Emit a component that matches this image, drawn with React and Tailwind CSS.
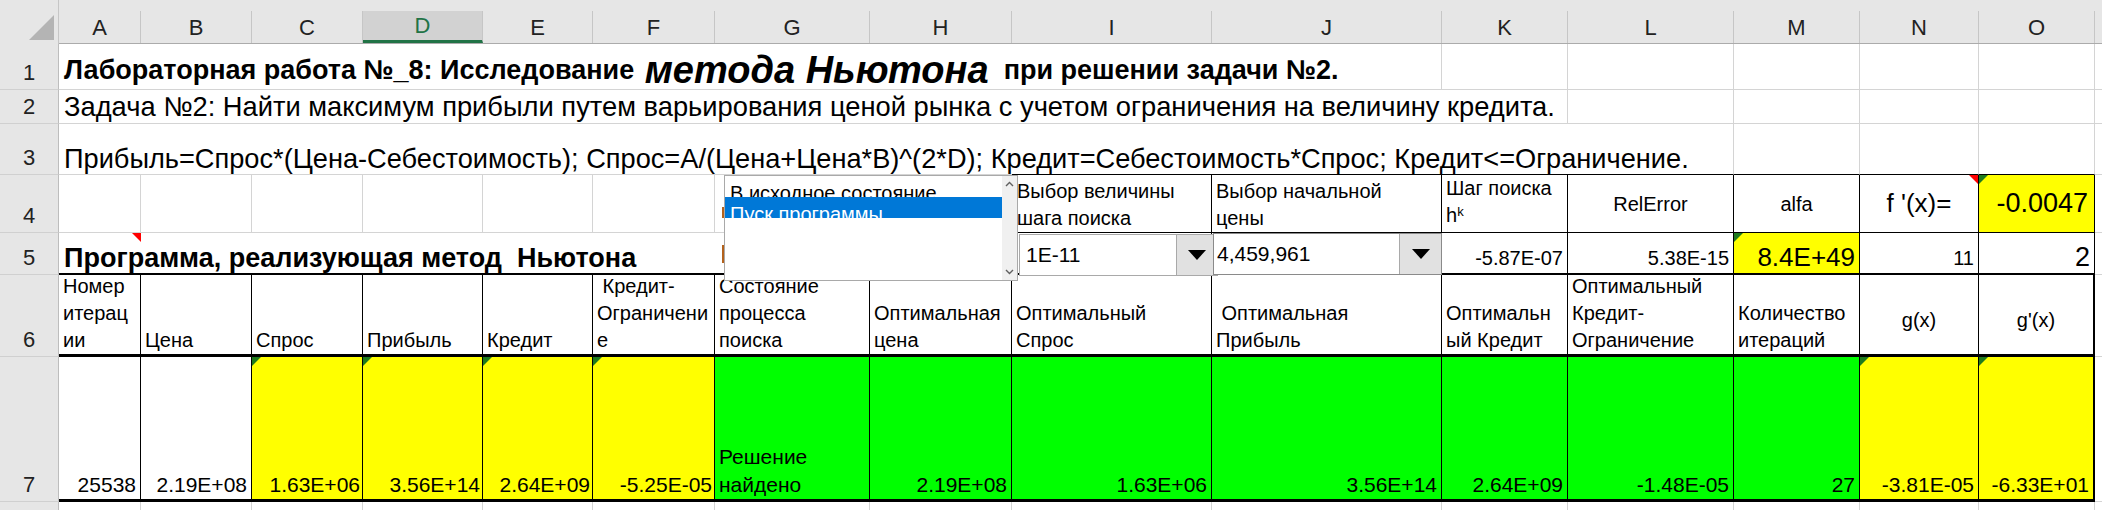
import React from 'react';

const gB = 'border-b border-b-[#d4d4d4]';
const gBR = 'border-b border-b-[#d4d4d4] border-r border-r-[#d4d4d4]';
const kBR = 'border-b border-b-black border-r border-r-black';

function ColHead({ label, selected }) {
  return (
    <div className="bg-[#e6e6e6] pt-[11px] flex border-b border-b-[#ababab]">
      <div
        className={
          selected
            ? 'flex-1 flex items-center justify-center border-r border-r-[#c6c6c6] bg-[#d2d2d2] border-b-[3px] border-b-[#217346] text-[#217346] text-[22px]'
            : 'flex-1 flex items-center justify-center border-r border-r-[#c6c6c6] text-[#222] text-[22px]'
        }
      >
        {label}
      </div>
    </div>
  );
}

function RowHead({ n }) {
  return (
    <div className="bg-[#e6e6e6] border-r border-r-[#bdbdbd] border-b border-b-[#d0d0d0] flex items-end justify-center pb-[3px] text-[22px] leading-[27px] text-[#222]">
      {n}
    </div>
  );
}

function GreenTri() {
  return <span className="absolute left-0 top-0 w-0 h-0 border-t-[9px] border-r-[9px] border-t-[#1e7b1e] border-r-transparent" />;
}

function RedTri() {
  return <span className="absolute right-0 top-0 w-0 h-0 border-t-[9px] border-l-[9px] border-t-[#ff0000] border-l-transparent" />;
}

function Arrow() {
  return (
    <svg width="18" height="10" viewBox="0 0 18 10">
      <polygon points="0,0 18,0 9,10" fill="#000" />
    </svg>
  );
}

export default function App() {
  const letters = ['A', 'B', 'C', 'D', 'E', 'F', 'G', 'H', 'I', 'J', 'K', 'L', 'M', 'N', 'O'];

  return (
    <div className="relative w-[2102px] h-[510px] overflow-hidden bg-white text-black font-['Liberation_Sans',Arial,sans-serif]">
      <div className="grid h-full grid-cols-[59px_82px_111px_111px_120px_110px_122px_155px_142px_200px_230px_126px_166px_126px_119px_116px_1fr] grid-rows-[44px_46px_34px_51px_58px_42px_82px_145px_1fr]">
        {/* column headers */}
        <div className="bg-[#e6e6e6] border-r border-r-[#c6c6c6] flex items-end justify-end pr-[4px] pb-[4px]">
          <svg width="25" height="25" viewBox="0 0 25 25">
            <polygon points="25,0 25,25 0,25" fill="#b4b4b4" />
          </svg>
        </div>
        {letters.map((l) => (
          <ColHead key={l} label={l} selected={l === 'D'} />
        ))}
        <div className="bg-[#e6e6e6] border-b border-b-[#ababab]" />

        {/* row 1 */}
        <RowHead n="1" />
        <div className={`${gB} flex items-end pl-[5px] pb-[5px] whitespace-nowrap text-[27px] leading-[27px]`}>
          <span className="font-bold">Лабораторная работа №_8: Исследование</span>
          <span className="font-bold italic text-[38px]">&nbsp;метода Ньютона</span>
          <span className="font-bold">&nbsp; при решении задачи №2.</span>
        </div>
        {['B', 'C', 'D', 'E', 'F', 'G', 'H', 'I'].map((c) => (
          <div key={c} className={gB} />
        ))}
        {['J', 'K', 'L', 'M', 'N', 'O'].map((c) => (
          <div key={c} className={gBR} />
        ))}
        <div className={gB} />

        {/* row 2 */}
        <RowHead n="2" />
        <div className={`${gB} flex items-end pl-[5px] pb-[3px] whitespace-nowrap text-[27.3px] leading-[27px]`}>
          Задача №2: Найти максимум прибыли путем варьирования ценой рынка с учетом ограничения на величину кредита.
        </div>
        {['B', 'C', 'D', 'E', 'F', 'G', 'H', 'I', 'J'].map((c) => (
          <div key={c} className={gB} />
        ))}
        {['K', 'L', 'M', 'N', 'O'].map((c) => (
          <div key={c} className={gBR} />
        ))}
        <div className={gB} />

        {/* row 3 */}
        <RowHead n="3" />
        <div className={`${gB} flex items-end pl-[5px] pb-[2px] whitespace-nowrap text-[27.2px] leading-[27px]`}>
          Прибыль=Спрос*(Цена-Себестоимость); Спрос=A/(Цена+Цена*B)^(2*D); Кредит=Себестоимость*Спрос; Кредит&lt;=Ограничение.
        </div>
        {['B', 'C', 'D', 'E', 'F', 'G', 'H'].map((c) => (
          <div key={c} className={gB} />
        ))}
        {['I', 'J', 'K'].map((c) => (
          <div key={c} className="border-b border-b-black" />
        ))}
        {['L', 'M', 'N', 'O'].map((c) => (
          <div key={c} className="border-b border-b-black border-r border-r-[#d4d4d4]" />
        ))}
        <div className={gB} />

        {/* row 4 */}
        <RowHead n="4" />
        {['A', 'B', 'C', 'D', 'E', 'F'].map((c) => (
          <div key={c} className={gBR} />
        ))}
        <div className={gB} />
        <div className={gB} />
        <div className={`${kBR} flex flex-col justify-end pl-[5px] text-[20px] leading-[27px] whitespace-nowrap`}>
          <span>Выбор величины</span>
          <span>шага поиска</span>
        </div>
        <div className={`${kBR} flex flex-col justify-end pl-[4px] text-[20px] leading-[27px] whitespace-nowrap`}>
          <span>Выбор начальной</span>
          <span>цены</span>
        </div>
        <div className={`${kBR} flex flex-col justify-end pl-[4px] pb-[3px] text-[20px] leading-[27px] whitespace-nowrap`}>
          <span>Шаг поиска</span>
          <span>
            h<sup className="text-[13px] leading-none">k</sup>
          </span>
        </div>
        <div className={`${kBR} flex items-center justify-center text-[20px]`}>RelError</div>
        <div className={`${kBR} flex items-center justify-center text-[20px]`}>alfa</div>
        <div className={`${kBR} relative flex items-center justify-center text-[26px]`}>
          <RedTri />
          f '(x)=
        </div>
        <div className={`${kBR} relative bg-[#ffff00] flex items-center justify-end pr-[6px] text-[27px]`}>
          <GreenTri />
          -0.0047
        </div>
        <div className={gB} />

        {/* row 5 */}
        <RowHead n="5" />
        <div className="relative border-b-2 border-b-black flex items-end pl-[5px] pb-[1px] whitespace-nowrap font-bold text-[27px] leading-[27px]">
          <RedTri />
          Программа, реализующая метод&nbsp; Ньютона
        </div>
        {['B', 'C', 'D', 'E', 'F', 'G', 'H'].map((c) => (
          <div key={c} className="border-b-2 border-b-black" />
        ))}
        <div className="border-b-2 border-b-black border-r border-r-black" />
        <div className="border-b-2 border-b-black border-r border-r-black" />
        <div className="border-b-2 border-b-black border-r border-r-black flex items-end justify-end pr-[4px] pb-[1px] text-[20px] leading-[27px]">
          -5.87E-07
        </div>
        <div className="border-b-2 border-b-black border-r border-r-black flex items-end justify-end pr-[4px] pb-[1px] text-[20px] leading-[27px]">
          5.38E-15
        </div>
        <div className="relative bg-[#ffff00] border-b-2 border-b-black border-r border-r-black flex items-end justify-end pr-[4px] pb-[1px] text-[26px] leading-[30px]">
          <GreenTri />
          8.4E+49
        </div>
        <div className="border-b-2 border-b-black border-r border-r-black flex items-end justify-end pr-[4px] pb-[1px] text-[20px] leading-[27px]">
          11
        </div>
        <div className="border-b-2 border-b-black border-r border-r-black flex items-end justify-end pr-[4px] pb-[1px] text-[27px] leading-[30px]">
          2
        </div>
        <div className={gB} />

        {/* row 6 */}
        <RowHead n="6" />
        {[
          ['A', ['Номер', 'итерац', 'ии']],
          ['B', ['Цена']],
          ['C', ['Спрос']],
          ['D', ['Прибыль']],
          ['E', ['Кредит']],
          ['F', ['\u00a0Кредит-', 'Ограничени', 'е']],
          ['G', ['Состояние', 'процесса', 'поиска']],
          ['H', ['Оптимальная', 'цена']],
          ['I', ['Оптимальный', 'Спрос']],
          ['J', ['\u00a0Оптимальная', 'Прибыль']],
          ['K', ['Оптимальн', 'ый Кредит']],
          ['L', ['Оптимальный', 'Кредит-', 'Ограничение']],
          ['M', ['Количество', 'итераций']],
        ].map(([c, lines]) => (
          <div
            key={c}
            className="border-b-[3px] border-b-black border-r border-r-black flex flex-col justify-end pl-[4px] text-[20px] leading-[27px] whitespace-nowrap overflow-hidden"
          >
            {lines.map((t, i) => (
              <span key={i}>{t}</span>
            ))}
          </div>
        ))}
        <div className="border-b-[3px] border-b-black border-r border-r-black flex items-center justify-center pt-[10px] text-[20px]">
          g(x)
        </div>
        <div className="border-b-[3px] border-b-black border-r-2 border-r-black flex items-center justify-center pt-[10px] text-[20px]">
          g'(x)
        </div>
        <div className={gB} />

        {/* row 7 */}
        <RowHead n="7" />
        <div className="border-b-[3px] border-b-black border-r border-r-black flex items-end justify-end pr-[4px] text-[21px] leading-[28px]">25538</div>
        <div className="border-b-[3px] border-b-black border-r border-r-black flex items-end justify-end pr-[4px] text-[21px] leading-[28px]">2.19E+08</div>
        {[
          ['C', '1.63E+06'],
          ['D', '3.56E+14'],
          ['E', '2.64E+09'],
          ['F', '-5.25E-05'],
        ].map(([c, v]) => (
          <div
            key={c}
            className="relative bg-[#ffff00] border-b-[3px] border-b-black border-r border-r-black flex items-end justify-end pr-[2px] text-[21px] leading-[28px]"
          >
            <GreenTri />
            {v}
          </div>
        ))}
        <div className="bg-[#00ff00] border-b-[3px] border-b-black border-r border-r-black flex flex-col justify-end pl-[4px] text-[21px] leading-[28px]">
          <span>Решение</span>
          <span>найдено</span>
        </div>
        {[
          ['H', '2.19E+08'],
          ['I', '1.63E+06'],
          ['J', '3.56E+14'],
          ['K', '2.64E+09'],
          ['L', '-1.48E-05'],
          ['M', '27'],
        ].map(([c, v]) => (
          <div
            key={c}
            className="bg-[#00ff00] border-b-[3px] border-b-black border-r border-r-black flex items-end justify-end pr-[4px] text-[21px] leading-[28px]"
          >
            {v}
          </div>
        ))}
        <div className="relative bg-[#ffff00] border-b-[3px] border-b-black border-r border-r-black flex items-end justify-end pr-[4px] text-[21px] leading-[28px]">
          <GreenTri />
          -3.81E-05
        </div>
        <div className="relative bg-[#ffff00] border-b-[3px] border-b-black border-r-2 border-r-black flex items-end justify-end pr-[4px] text-[21px] leading-[28px]">
          <GreenTri />
          -6.33E+01
        </div>
        <div className={gB} />

        {/* row 8 */}
        <div className="bg-[#e6e6e6] border-r border-r-[#bdbdbd]" />
        {letters.map((c) => (
          <div key={c} className="border-r border-r-[#d4d4d4]" />
        ))}
        <div />
      </div>

      {/* hidden control edges behind the list box */}
      <div className="absolute left-[722px] top-[207px] w-[2px] h-[11px] bg-[#b4621c]" />
      <div className="absolute left-[722px] top-[245px] w-[2px] h-[18px] bg-[#b4621c]" />

      {/* list box */}
      <div className="absolute left-[724px] top-[175px] w-[294px] h-[106px] border border-[#a9a9a9] bg-white flex text-[20px] leading-[20px]">
        <div className="flex-1 flex flex-col">
          <div className="h-[21px] overflow-hidden pt-[7px] pl-[5px] whitespace-nowrap">В исходное состояние</div>
          <div className="h-[21px] overflow-hidden pt-[7px] pl-[5px] whitespace-nowrap bg-[#0078d7] text-white">Пуск программы</div>
        </div>
        <div className="w-[15px] bg-[#f0f0f0] flex flex-col justify-between items-center py-[5px]">
          <svg width="9" height="6" viewBox="0 0 9 6">
            <polyline points="1,5 4.5,1.5 8,5" fill="none" stroke="#606060" strokeWidth="1.4" />
          </svg>
          <svg width="9" height="6" viewBox="0 0 9 6">
            <polyline points="1,1 4.5,4.5 8,1" fill="none" stroke="#606060" strokeWidth="1.4" />
          </svg>
        </div>
      </div>

      {/* combo box I5 */}
      <div className="absolute left-[1019px] top-[234px] w-[199px] h-[42px] border border-[#a9a9a9] bg-white flex">
        <div className="flex-1 flex items-center pl-[6px] text-[21px]">1E-11</div>
        <div className="w-[41px] bg-[#e1e1e1] border-l border-l-[#a9a9a9] flex items-center justify-center">
          <Arrow />
        </div>
      </div>

      {/* combo box J5 */}
      <div className="absolute left-[1213px] top-[233px] w-[229px] h-[42px] border border-[#8a8a8a] bg-white flex">
        <div className="flex-1 flex items-center pl-[3px] text-[21px]">4,459,961</div>
        <div className="w-[42px] bg-[#e1e1e1] border-l border-l-[#a9a9a9] flex items-center justify-center">
          <Arrow />
        </div>
      </div>
    </div>
  );
}
